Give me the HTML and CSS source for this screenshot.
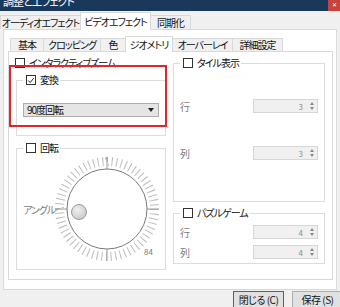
FILE: index.html
```html
<!DOCTYPE html>
<html lang="ja">
<head>
<meta charset="UTF-8">
<title>調整とエフェクト</title>
<link rel="stylesheet" href="styles.css">
</head>
<body>
<div class="window">
    <div class="titlebar">
        <span class="title">調整とエフェクト</span>
        <span class="close">✕</span>
    </div>

    <div class="tabs outer-tabs">
        <div class="tab w80">オーディオエフェクト</div>
        <div class="tab active w70">ビデオエフェクト</div>
        <div class="tab w40">同期化</div>
    </div>

    <div class="outer-page">
        <div class="tabs inner-tabs">
            <div class="tab w33">基本</div>
            <div class="tab w57">クロッピング</div>
            <div class="tab w25">色</div>
            <div class="tab active w47">ジオメトリ</div>
            <div class="tab w60">オーバーレイ</div>
            <div class="tab w50">詳細設定</div>
        </div>

        <div class="inner-page">
            <div class="col">
                <label class="check-row"><span class="cb"></span>インタラクティブズーム</label>

                <fieldset class="group transform">
                    <legend><span class="cb checked"><svg viewBox="0 0 9 9" width="9" height="9"><path d="M1.5 4.5 L3.6 6.8 L7.6 1.8" fill="none" stroke="#222" stroke-width="1.1"/></svg></span>変換</legend>
                    <div class="combo"><span>90度回転</span><span class="arrow"></span></div>
                </fieldset>

                <fieldset class="group rotate">
                    <legend><span class="cb"></span>回転</legend>
                    <div class="dial-row">
                        <span class="muted angle">アングル</span>
                        <svg class="dial" width="108" height="108" viewBox="0 0 108 108">
                            <circle cx="54" cy="54" r="47.5" fill="none" stroke="#bdbdbd" stroke-width="9" pathLength="64" stroke-dasharray="0.22 0.78"/>
                            <g stroke="#9a9a9a" stroke-width="1">
                                <line x1="54" y1="2" x2="54" y2="14"/>
                                <line x1="54" y1="94" x2="54" y2="106"/>
                                <line x1="2" y1="54" x2="14" y2="54"/>
                                <line x1="94" y1="54" x2="106" y2="54"/>
                            </g>
                            <circle cx="54" cy="54" r="40" fill="#fff" stroke="#7a7a7a" stroke-width="1"/>
                            <defs>
                                <radialGradient id="ball" cx="0.4" cy="0.35" r="0.7">
                                    <stop offset="0" stop-color="#efefef"/>
                                    <stop offset="1" stop-color="#c9c9c9"/>
                                </radialGradient>
                            </defs>
                            <circle cx="26" cy="57" r="7.5" fill="url(#ball)" stroke="#9a9a9a" stroke-width="1"/>
                            <text x="91" y="100" class="dial-value">84</text>
                        </svg>
                    </div>
                </fieldset>
            </div>

            <div class="col">
                <fieldset class="group tile">
                    <legend><span class="cb"></span>タイル表示</legend>
                    <div class="spin-row first"><span class="muted">行</span><div class="spin"><span>3</span><span class="spin-btn"></span></div></div>
                    <div class="spin-row second"><span class="muted">列</span><div class="spin"><span>3</span><span class="spin-btn"></span></div></div>
                </fieldset>

                <fieldset class="group puzzle">
                    <legend><span class="cb"></span>パズルゲーム</legend>
                    <div class="spin-row"><span class="muted">行</span><div class="spin"><span>4</span><span class="spin-btn"></span></div></div>
                    <div class="spin-row"><span class="muted">列</span><div class="spin"><span>4</span><span class="spin-btn"></span></div></div>
                </fieldset>
            </div>
        </div>
    </div>

    <div class="buttons">
        <button class="btn focused">閉じる (C)</button>
        <button class="btn">保存 (S)</button>
    </div>

    <div class="highlight"></div>
</div>
</body>
</html>
```

FILE: styles.css
```css
body {
    margin: 0;
    background: #f0f0f0;
}
.window {
    position: relative;
    width: 340px;
    height: 307px;
    overflow: hidden;
    background: #f0f0f0;
    font-family: "Noto Sans CJK JP", "Noto Sans", sans-serif;
    font-size: 10px;
    letter-spacing: -1px;
    font-feature-settings: "palt";
    color: #111;
}
.titlebar {
    height: 11px;
    background: #19395c;
    display: flex;
    justify-content: space-between;
    overflow: hidden;
}
.title {
    color: #fff;
    font-size: 11px;
    line-height: 12px;
    margin: -5px 0 0 3px;
}
.close {
    width: 12px;
    height: 11px;
    background: #c9423c;
    color: #fff;
    font-size: 6px;
    letter-spacing: 0;
    line-height: 10px;
    text-align: center;
}

/* tabs */
.tabs {
    display: flex;
    align-items: flex-end;
}
.tab {
    box-sizing: border-box;
    border: 1px solid #d9d9d9;
    border-bottom: none;
    background: #f0f0f0;
    text-align: center;
    margin-right: -1px;
    white-space: nowrap;
}
.tab.active {
    background: #fff;
    position: relative;
    z-index: 1;
    margin-bottom: -1px;
}
.outer-tabs {
    height: 17px;
    margin-top: 1px;
}
.outer-tabs .tab {
    height: 14px;
    line-height: 13px;
}
.outer-tabs .tab.active {
    height: 18px;
    line-height: 17px;
}
.inner-tabs {
    height: 15px;
    margin-left: 2px;
}
.inner-tabs .tab {
    height: 13px;
    line-height: 12px;
}
.inner-tabs .tab.active {
    height: 16px;
    line-height: 15px;
}
.w25 { width: 26px; }
.w33 { width: 34px; }
.w40 { width: 41px; }
.w47 { width: 48px; }
.w50 { width: 51px; }
.w57 { width: 58px; }
.w60 { width: 61px; }
.w70 { width: 71px; }
.w80 { width: 81px; }

.outer-page {
    box-sizing: border-box;
    margin: 0 3px;
    height: 261px;
    background: #fff;
    border: 1px solid #d9d9d9;
    padding: 6px 3px 0 4px;
}
.inner-page {
    box-sizing: border-box;
    height: 229px;
    border: 1px solid #d9d9d9;
    padding: 5px 7px 0 7px;
    display: grid;
    grid-template-columns: 150px 152px;
    column-gap: 7px;
}
.col {
    display: flex;
    flex-direction: column;
}

/* checkboxes */
.check-row, legend {
    display: flex;
    align-items: center;
    gap: 4px;
    height: 12px;
    line-height: 12px;
    white-space: nowrap;
}
.check-row {
    margin-left: -1px;
}
.cb {
    box-sizing: border-box;
    flex: none;
    width: 10px;
    height: 10px;
    border: 1px solid #333;
    background: #fff;
    display: flex;
    align-items: center;
    justify-content: center;
}
.cb svg {
    display: block;
}

/* group boxes */
.group {
    box-sizing: border-box;
    margin: 0;
    border: 1px solid #dcdcdc;
    padding: 0 6px;
    min-width: 0;
}
legend {
    padding: 0 2px 0 3px;
}
.transform {
    margin-top: 5px;
    height: 62px;
    padding-top: 17px;
}
.rotate {
    margin-top: 6px;
    height: 128px;
}
.tile {
    height: 145px;
}
.puzzle {
    margin-top: 5px;
    height: 57px;
}

.muted {
    color: #7a7a7a;
}

/* combo */
.combo {
    box-sizing: border-box;
    height: 14px;
    background: #e5e5e5;
    border: 1px solid #adadad;
    display: flex;
    justify-content: space-between;
    align-items: center;
    padding: 0 4px 0 3px;
    line-height: 12px;
}
.arrow {
    width: 0;
    height: 0;
    border-left: 3.5px solid transparent;
    border-right: 3.5px solid transparent;
    border-top: 4px solid #222;
}

/* dial */
.dial-row {
    display: flex;
    align-items: center;
    margin-top: 1px;
}
.angle {
    width: 30px;
    flex: none;
    white-space: nowrap;
}
.dial {
    display: block;
    flex: none;
}
.dial-value {
    font-size: 8px;
    fill: #777;
    letter-spacing: 0;
}

/* spin boxes */
.spin-row {
    display: flex;
    justify-content: space-between;
    align-items: center;
    height: 14px;
}
.tile .spin-row.first {
    margin-top: 30px;
}
.tile .spin-row.second {
    margin-top: 33px;
}
.puzzle .spin-row {
    margin-top: 6px;
}
.spin {
    box-sizing: border-box;
    width: 65px;
    height: 14px;
    background: #f0f0f0;
    border: 1px solid #d6d6d6;
    display: flex;
    justify-content: flex-end;
    align-items: center;
    color: #8a8a8a;
    font-size: 8px;
    letter-spacing: 0;
    gap: 5px;
    padding-right: 2px;
}
.spin-btn {
    width: 7px;
    height: 8px;
    display: flex;
    flex-direction: column;
    justify-content: space-between;
    align-items: center;
}
.spin-btn::before, .spin-btn::after {
    content: "";
    width: 0;
    height: 0;
    border-left: 2px solid transparent;
    border-right: 2px solid transparent;
}
.spin-btn::before {
    border-bottom: 3px solid #888;
}
.spin-btn::after {
    border-top: 3px solid #888;
}

/* bottom buttons */
.buttons {
    display: flex;
    justify-content: flex-end;
    gap: 8px;
    margin: 1px -3px 0 0;
}
.btn {
    box-sizing: border-box;
    width: 51px;
    height: 17px;
    background: #e1e1e1;
    border: 1px solid #adadad;
    font-family: inherit;
    font-size: 10px;
    letter-spacing: -0.5px;
    font-feature-settings: "palt";
    padding: 0;
    line-height: 14px;
    color: #111;
}
.btn.focused {
    border-color: #0078d7;
}

/* annotation overlay */
.highlight {
    position: absolute;
    left: 9px;
    top: 65px;
    width: 158px;
    height: 62px;
    box-sizing: border-box;
    border: 2px solid #e3262c;
}
```
